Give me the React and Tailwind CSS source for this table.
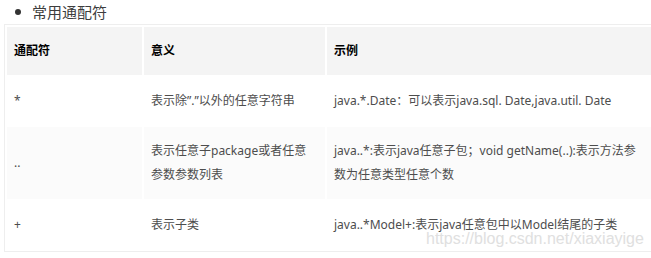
const rows = [
  {
    symbol: "*",
    meaning: "表示除\u201d.\u201d以外的任意字符串",
    example: "java.*.Date：可以表示java.sql. Date,java.util. Date",
    shaded: false,
  },
  {
    symbol: "..",
    meaning: "表示任意子package或者任意参数参数列表",
    example: "java..*:表示java任意子包；void getName(..):表示方法参数为任意类型任意个数",
    shaded: true,
  },
  {
    symbol: "+",
    meaning: "表示子类",
    example: "java..*Model+:表示java任意包中以Model结尾的子类",
    shaded: false,
  },
];

const font = {
  fontFamily: '"Noto Sans", "Noto Sans CJK SC", sans-serif',
};

export default function App() {
  return (
    <div
      className="relative w-[651px] h-[258px] overflow-hidden bg-white text-[#4d4d4d]"
      style={font}
    >
      <div className="flex items-center h-[24px] pl-[15px] gap-[11px]">
        <span className="w-[6px] h-[6px] rounded-full bg-[#333]" />
        <span className="text-[15px] leading-[24px] text-[#3d3d3d]">常用通配符</span>
      </div>

      <table className="ml-[4px] w-[666px] table-fixed border-separate border-spacing-[2px] border border-[#eeeeee] text-[12px] leading-[24px]">
        <thead>
          <tr className="bg-[#f4f4f4] text-black">
            <th className="w-[135px] px-[7px] py-[12px] text-left font-bold">通配符</th>
            <th className="w-[181px] px-[7px] py-[12px] text-left font-bold">意义</th>
            <th className="px-[7px] py-[12px] text-left font-bold">示例</th>
          </tr>
        </thead>
        <tbody>
          {rows.map((row) => (
            <tr key={row.symbol} className={row.shaded ? "bg-[#fbfbfb]" : "bg-white"}>
              <td className="px-[7px] py-[12px] align-middle">{row.symbol}</td>
              <td className="px-[7px] py-[12px] align-middle">{row.meaning}</td>
              <td className="px-[7px] py-[12px] pr-[30px] align-middle">{row.example}</td>
            </tr>
          ))}
        </tbody>
      </table>

      {/* csdn watermark */}
      <div
        className="absolute left-[426px] top-[230px] text-[16px] leading-[18px] text-[#e0e0e0] whitespace-nowrap pointer-events-none"
        style={{ fontFamily: '"Liberation Sans", Arial, sans-serif' }}
      >
        https://blog.csdn.net/xiaxiayige
      </div>
    </div>
  );
}
